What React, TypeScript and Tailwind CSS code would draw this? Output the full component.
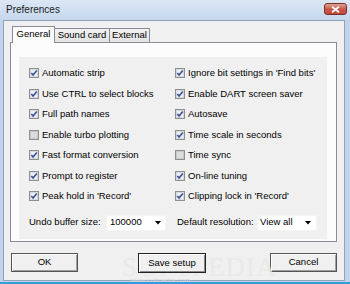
import React from "react";

const Check = ({ on }: { on: boolean }) => (
  <svg width="10" height="10" viewBox="0 0 10 10" className="shrink-0">
    <rect x="0.5" y="0.5" width="9" height="9" fill="#f6f6f6" stroke="#8e8f8f" />
    <rect x="1.5" y="1.5" width="7" height="7" fill={on ? "#eef0f4" : "#dcdcdc"} stroke={on ? "#d4d8e0" : "#c8c8c8"} />
    {on && <path d="M2.3 4.9 L4.1 7 L7.8 2.4" fill="none" stroke="#3b4f93" strokeWidth="1.6" />}
  </svg>
);

const Row = ({ label, on }: { label: string; on: boolean }) => (
  <div className="h-[20.5px] flex items-center gap-[3px] whitespace-nowrap">
    <Check on={on} />
    <span>{label}</span>
  </div>
);

const Arrow = () => (
  <svg width="6" height="4" viewBox="0 0 6 4">
    <path d="M0 0 H6 L3 3.5 Z" fill="#000" />
  </svg>
);

export default function App() {
  const left: [string, boolean][] = [
    ["Automatic strip", true],
    ["Use CTRL to select blocks", true],
    ["Full path names", true],
    ["Enable turbo plotting", false],
    ["Fast format conversion", true],
    ["Prompt to register", true],
    ["Peak hold in 'Record'", true],
  ];
  const right: [string, boolean][] = [
    ["Ignore bit settings in 'Find bits'", true],
    ["Enable DART screen saver", true],
    ["Autosave", true],
    ["Time scale in seconds", true],
    ["Time sync", false],
    ["On-line tuning", true],
    ["Clipping lock in 'Record'", true],
  ];
  return (
    <div className="relative w-[350px] h-[284px] overflow-hidden flex flex-col bg-[#c2d4eb] font-['Liberation_Sans',Arial,sans-serif] text-[9.5px] text-black">
      <div className="h-[20px] shrink-0 flex items-center justify-between pl-[6px] pr-[3px] bg-gradient-to-b from-[#dce7f5] to-[#c6d8ee]">
        <span className="text-[10px] text-[#1b1b1b] -mt-[1px]">Preferences</span>
        <div className="w-[23px] h-[12px] -mt-[2px] rounded-[3px] border border-[#7a2f2a] bg-gradient-to-b from-[#e0a394] via-[#c9574a] to-[#c0473a] flex items-center justify-center">
          <svg width="9" height="7" viewBox="0 0 9 7">
            <path d="M1 0.8 L8 6.2 M8 0.8 L1 6.2" stroke="#fff" strokeWidth="1.8" />
          </svg>
        </div>
      </div>
      <div className="flex-1 ml-[3px] mr-[5px] mb-[3px] bg-[#f0f0f0] border border-[#8ea2bd] flex flex-col">
        <div className="pt-[5px] ml-[8px] h-[22px] -mb-[1px] flex items-end relative z-10">
          <div className="w-[43px] h-[17px] bg-[#fcfcfc] border border-b-0 border-[#898c95] flex items-center justify-center pb-[2px]">
            General
          </div>
          <div className="w-[55px] h-[14px] mb-[1px] bg-gradient-to-b from-[#f2f2f2] to-[#e3e3e3] border border-b-0 border-l-0 border-[#898c95] flex items-center justify-center">
            Sound card
          </div>
          <div className="w-[40px] h-[14px] mb-[1px] bg-gradient-to-b from-[#f2f2f2] to-[#e3e3e3] border border-b-0 border-l-0 border-[#898c95] flex items-center justify-center">
            External
          </div>
        </div>
        <div className="ml-[6px] w-[327px] h-[200px] bg-[#fcfcfc] border border-[#898c95] pl-[8px] pt-[14px] pr-[9px] pb-[2px] flex">
          <div className="flex-1 bg-[#f0f0f0] pl-[10px] pt-[6px]">
            <div className="grid grid-cols-[146px_1fr]">
              <div>
                {left.map(([l, on]) => (
                  <Row key={l} label={l} on={on} />
                ))}
              </div>
              <div>
                {right.map(([l, on]) => (
                  <Row key={l} label={l} on={on} />
                ))}
              </div>
            </div>
            <div className="grid grid-cols-[148px_1fr] mt-[8px]">
              <div className="flex items-center h-[16px]">
                <span className="w-[77px] whitespace-nowrap">Undo buffer size:</span>
                <div className="w-[60px] h-[16px] bg-white border border-[#f4f4f4] flex items-center justify-between pl-[3px] pr-[4px]">
                  <span>100000</span>
                  <Arrow />
                </div>
              </div>
              <div className="flex items-center h-[16px]">
                <span className="w-[80px] whitespace-nowrap">Default resolution:</span>
                <div className="w-[60px] h-[16px] bg-white border border-[#f4f4f4] flex items-center justify-between pl-[2px] pr-[5px]">
                  <span>View all</span>
                  <Arrow />
                </div>
              </div>
            </div>
          </div>
        </div>
        <div className="flex ml-[7px] mt-[11px]">
          <div className="w-[67px] h-[19px] border border-[#555] bg-[#f0f0f0] shadow-[inset_1px_1px_0_#fff,inset_-1px_-1px_0_#a0a0a0] flex items-center justify-center">
            OK
          </div>
          <div className="ml-[60px] w-[68px] h-[20px] border border-[#222] bg-[#f0f0f0] shadow-[inset_1px_1px_0_#fff,inset_-1px_-1px_0_#8a8a8a] flex items-center justify-center relative z-10">
            Save setup
          </div>
          <div className="ml-[64px] w-[67px] h-[19px] border border-[#555] bg-[#f0f0f0] shadow-[inset_1px_1px_0_#fff,inset_-1px_-1px_0_#a0a0a0] flex items-center justify-center">
            Cancel
          </div>
        </div>
      </div>
      <div className="absolute left-[122px] top-[247px] text-[27px] tracking-[1px] font-['Liberation_Serif',serif] text-[#e8e8e8] opacity-80 pointer-events-none">
        SOFTPEDIA
      </div>
      <div className="absolute left-[130px] top-[276px] text-[7px] text-[#d8d8d8] pointer-events-none">
        www.softpedia.com
      </div>
      <div className="absolute left-0 right-0 bottom-0 h-[2px] bg-[#3a9ad6]" />
    </div>
  );
}
